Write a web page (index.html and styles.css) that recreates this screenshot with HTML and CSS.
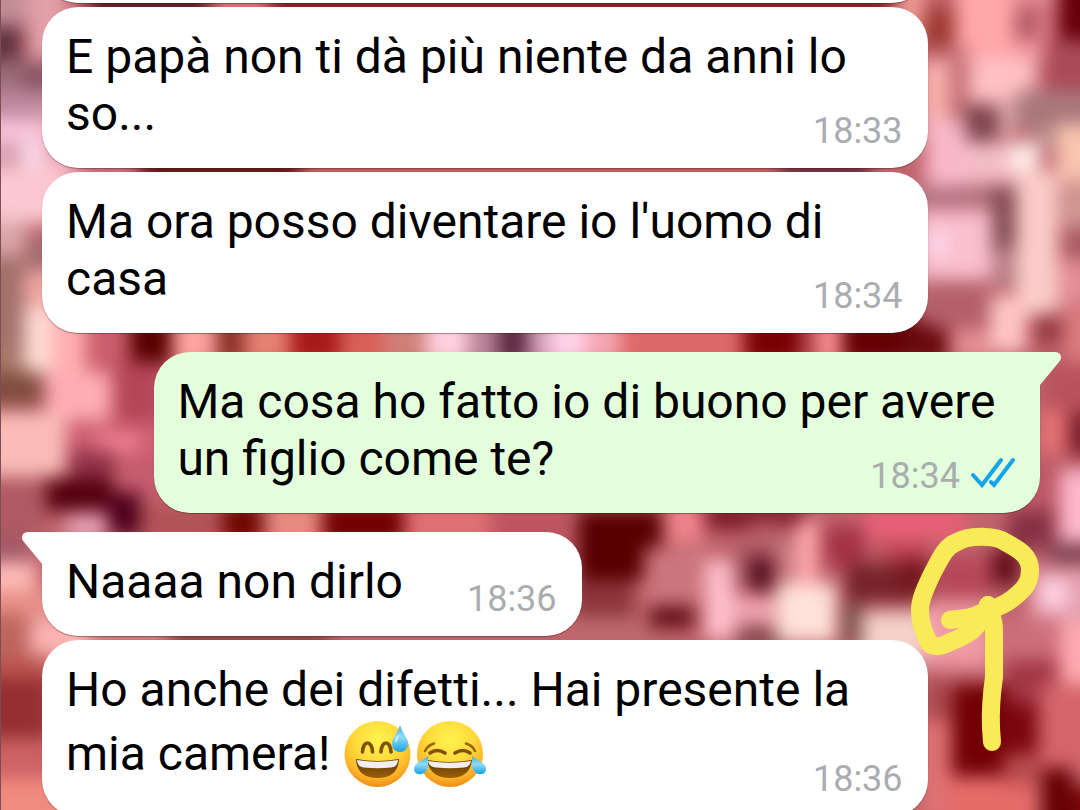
FILE: index.html
```
<!DOCTYPE html>
<html lang="it">
<head>
<meta charset="utf-8">
<meta name="viewport" content="width=device-width, initial-scale=1">
<title>Chat</title>
<link rel="stylesheet" href="styles.css">
</head>
<body>
<main class="chat">
  <svg class="wallpaper" viewBox="0 0 1080 810" preserveAspectRatio="xMidYMid slice" aria-hidden="true">
    <defs><filter id="soft" x="-5%" y="-5%" width="110%" height="110%" color-interpolation-filters="sRGB"><feGaussianBlur stdDeviation="9"/></filter></defs>
    <rect width="1080" height="810" fill="#c4646c"/>
    <g filter="url(#soft)">
      <rect x="-30" y="-30" width="1140" height="870" fill="#c0646c"/>
      <!-- left edge, upper half -->
      <rect x="-30" y="-30" width="60" height="58" fill="#c48d96"/>
      <rect x="28" y="-30" width="40" height="90" fill="#e2a0a8"/>
      <rect x="-30" y="26" width="52" height="34" fill="#60323f"/>
      <rect x="-30" y="60" width="54" height="30" fill="#9a6b79"/>
      <rect x="24" y="62" width="30" height="32" fill="#875262"/>
      <rect x="-30" y="90" width="90" height="28" fill="#bd889c"/>
      <rect x="-30" y="118" width="90" height="24" fill="#f8c4da"/>
      <rect x="-30" y="142" width="52" height="22" fill="#d9a0b4"/>
      <rect x="22" y="142" width="24" height="24" fill="#fadff0"/>
      <rect x="44" y="110" width="50" height="65" fill="#f0a3b2"/>
      <rect x="-30" y="166" width="100" height="58" fill="#fbc8d1"/>
      <rect x="-30" y="222" width="56" height="34" fill="#d9a4a8"/>
      <rect x="26" y="238" width="30" height="32" fill="#a06a6d"/>
      <rect x="-30" y="258" width="54" height="90" fill="#a2706b"/>
      <rect x="24" y="270" width="50" height="48" fill="#efa6a2"/>
      <rect x="24" y="308" width="28" height="68" fill="#ffdcd3"/>
      <!-- gap under the second message -->
      <rect x="52" y="308" width="34" height="100" fill="#ffafb0"/>
      <rect x="86" y="318" width="44" height="52" fill="#cb5e6c"/>
      <rect x="130" y="318" width="42" height="46" fill="#580000"/>
      <rect x="172" y="318" width="44" height="46" fill="#ffa49f"/>
      <rect x="216" y="318" width="28" height="46" fill="#8b3028"/>
      <rect x="244" y="318" width="46" height="46" fill="#e48172"/>
      <rect x="290" y="318" width="50" height="46" fill="#a81a1a"/>
      <rect x="340" y="318" width="44" height="46" fill="#d96056"/>
      <rect x="384" y="318" width="42" height="46" fill="#ce8078"/>
      <rect x="426" y="318" width="42" height="46" fill="#ffd1e0"/>
      <rect x="468" y="318" width="30" height="46" fill="#b98499"/>
      <rect x="498" y="318" width="30" height="46" fill="#59293f"/>
      <rect x="528" y="318" width="22" height="46" fill="#d39fb8"/>
      <rect x="550" y="318" width="36" height="46" fill="#ffd3e8"/>
      <rect x="586" y="318" width="34" height="46" fill="#f5a6b2"/>
      <rect x="620" y="318" width="124" height="46" fill="#dd6a68"/>
      <rect x="744" y="318" width="56" height="46" fill="#780003"/>
      <rect x="800" y="318" width="18" height="46" fill="#b54a4f"/>
      <rect x="818" y="318" width="24" height="46" fill="#fc9095"/>
      <rect x="842" y="318" width="104" height="46" fill="#640004"/>
      <!-- left edge, beside the sent message -->
      <rect x="-30" y="348" width="54" height="30" fill="#a77a6b"/>
      <rect x="-30" y="372" width="72" height="34" fill="#824c40"/>
      <rect x="46" y="372" width="66" height="48" fill="#ffadb4"/>
      <rect x="112" y="362" width="50" height="60" fill="#b54658"/>
      <rect x="-30" y="412" width="96" height="64" fill="#fabcb8"/>
      <rect x="66" y="422" width="96" height="40" fill="#cf6073"/>
      <rect x="96" y="434" width="42" height="18" fill="#f28296"/>
      <rect x="68" y="450" width="46" height="30" fill="#913248"/>
      <rect x="120" y="454" width="48" height="40" fill="#c65c70"/>
      <rect x="-30" y="482" width="72" height="60" fill="#ae5963"/>
      <rect x="46" y="478" width="66" height="34" fill="#55000f"/>
      <rect x="108" y="492" width="32" height="44" fill="#4e001c"/>
      <rect x="66" y="512" width="42" height="28" fill="#e8a0b4"/>
      <!-- gap under the sent message -->
      <rect x="140" y="504" width="78" height="40" fill="#b25358"/>
      <rect x="222" y="504" width="40" height="40" fill="#6e0800"/>
      <rect x="268" y="504" width="54" height="40" fill="#e88b80"/>
      <rect x="322" y="504" width="82" height="40" fill="#720000"/>
      <rect x="404" y="504" width="86" height="40" fill="#df7073"/>
      <rect x="490" y="504" width="82" height="60" fill="#bd5560"/>
      <rect x="578" y="510" width="84" height="70" fill="#560000"/>
      <rect x="572" y="580" width="62" height="36" fill="#8b353b"/>
      <rect x="570" y="616" width="86" height="40" fill="#bd686b"/>
      <rect x="666" y="504" width="38" height="38" fill="#f0858c"/>
      <rect x="704" y="504" width="104" height="26" fill="#7c1a28"/>
      <rect x="644" y="548" width="68" height="55" fill="#cb757c"/>
      <rect x="748" y="522" width="40" height="26" fill="#b55f68"/>
      <rect x="705" y="560" width="30" height="80" fill="#ffbecb"/>
      <rect x="734" y="548" width="18" height="40" fill="#a4545f"/>
      <rect x="750" y="556" width="24" height="36" fill="#561020"/>
      <rect x="776" y="540" width="20" height="50" fill="#c87a80"/>
      <rect x="796" y="520" width="22" height="66" fill="#ffa8ad"/>
      <rect x="650" y="607" width="44" height="20" fill="#5c0a10"/>
      <rect x="734" y="596" width="40" height="28" fill="#efa3b0"/>
      <rect x="738" y="628" width="50" height="20" fill="#7d454a"/>
      <rect x="776" y="584" width="60" height="58" fill="#ffe2da"/>
      <rect x="824" y="526" width="42" height="40" fill="#a53344"/>
      <rect x="864" y="510" width="102" height="30" fill="#e86077"/>
      <rect x="880" y="542" width="50" height="24" fill="#bd4453"/>
      <rect x="845" y="564" width="78" height="38" fill="#762329"/>
      <rect x="842" y="604" width="24" height="40" fill="#7d5048"/>
      <rect x="862" y="612" width="72" height="50" fill="#f4d2ca"/>
      <!-- right edge, upper half -->
      <rect x="900" y="-30" width="24" height="60" fill="#f09c95"/>
      <rect x="924" y="8" width="30" height="38" fill="#9d382f"/>
      <rect x="956" y="-30" width="60" height="92" fill="#ffa7a9"/>
      <rect x="1014" y="-30" width="44" height="36" fill="#e38c94"/>
      <rect x="1014" y="10" width="22" height="30" fill="#b45a65"/>
      <rect x="1036" y="10" width="20" height="40" fill="#d57882"/>
      <rect x="1058" y="-30" width="52" height="70" fill="#68000b"/>
      <rect x="1014" y="40" width="28" height="22" fill="#f0989e"/>
      <rect x="1046" y="40" width="60" height="50" fill="#aa4a58"/>
      <rect x="922" y="60" width="26" height="80" fill="#fab4b0"/>
      <rect x="948" y="46" width="20" height="76" fill="#c8757a"/>
      <rect x="970" y="58" width="66" height="48" fill="#ffc0c4"/>
      <rect x="964" y="104" width="34" height="38" fill="#7d434c"/>
      <rect x="998" y="100" width="18" height="36" fill="#dba6a9"/>
      <rect x="1016" y="90" width="84" height="38" fill="#a9777b"/>
      <rect x="1056" y="124" width="50" height="58" fill="#f8c4af"/>
      <rect x="1030" y="128" width="26" height="20" fill="#ba8c8c"/>
      <rect x="926" y="120" width="40" height="66" fill="#f8b8c9"/>
      <rect x="966" y="142" width="74" height="42" fill="#f4bdc6"/>
      <rect x="1010" y="144" width="30" height="26" fill="#ffeeea"/>
      <rect x="916" y="188" width="94" height="18" fill="#ae7380"/>
      <rect x="992" y="186" width="24" height="62" fill="#804850"/>
      <rect x="994" y="248" width="22" height="40" fill="#b57e85"/>
      <rect x="1016" y="172" width="42" height="144" fill="#fbccc9"/>
      <rect x="1060" y="184" width="50" height="44" fill="#cf9591"/>
      <rect x="1064" y="230" width="46" height="26" fill="#a55a62"/>
      <rect x="1058" y="260" width="50" height="46" fill="#e28d94"/>
      <rect x="918" y="210" width="74" height="70" fill="#f9bfcd"/>
      <rect x="926" y="232" width="22" height="24" fill="#ffd8ee"/>
      <rect x="924" y="282" width="66" height="46" fill="#b45f6b"/>
      <rect x="990" y="296" width="36" height="56" fill="#ffc6c5"/>
      <rect x="1036" y="314" width="26" height="30" fill="#93393f"/>
      <rect x="1064" y="310" width="46" height="58" fill="#dc7c80"/>
      <rect x="952" y="330" width="38" height="30" fill="#e38e92"/>
      <rect x="900" y="330" width="48" height="34" fill="#680a0e"/>
      <!-- right edge, lower half -->
      <rect x="1044" y="362" width="66" height="48" fill="#b9525b"/>
      <rect x="1042" y="410" width="24" height="44" fill="#e87376"/>
      <rect x="1068" y="412" width="42" height="44" fill="#7d1f2b"/>
      <rect x="1028" y="456" width="30" height="58" fill="#bd5867"/>
      <rect x="1060" y="470" width="50" height="74" fill="#ffb8cd"/>
      <rect x="1008" y="510" width="46" height="38" fill="#863044"/>
      <rect x="1050" y="542" width="60" height="22" fill="#804252"/>
      <rect x="938" y="556" width="54" height="40" fill="#b64759"/>
      <rect x="992" y="548" width="28" height="38" fill="#64101c"/>
      <rect x="900" y="560" width="30" height="30" fill="#74151c"/>
      <rect x="926" y="602" width="66" height="66" fill="#f09aa6"/>
      <rect x="1030" y="568" width="80" height="58" fill="#e6a0af"/>
      <rect x="1040" y="580" width="28" height="28" fill="#ffd3e4"/>
      <rect x="1000" y="618" width="60" height="40" fill="#cd6e7b"/>
      <rect x="1060" y="624" width="50" height="60" fill="#ffaab0"/>
      <rect x="1006" y="660" width="52" height="44" fill="#a33745"/>
      <rect x="952" y="684" width="56" height="92" fill="#720004"/>
      <rect x="1000" y="704" width="38" height="50" fill="#7c0610"/>
      <rect x="926" y="680" width="22" height="40" fill="#a7454b"/>
      <rect x="922" y="720" width="28" height="100" fill="#e17172"/>
      <rect x="950" y="778" width="86" height="58" fill="#e56b68"/>
      <rect x="1004" y="754" width="36" height="30" fill="#b94c4e"/>
      <rect x="1040" y="684" width="70" height="84" fill="#d4646a"/>
      <rect x="1042" y="768" width="30" height="68" fill="#640004"/>
      <rect x="1072" y="786" width="40" height="50" fill="#7a0808"/>
      <!-- left edge, lower half -->
      <rect x="-30" y="540" width="60" height="22" fill="#a15868"/>
      <rect x="-30" y="562" width="66" height="28" fill="#ffbcb8"/>
      <rect x="-30" y="590" width="100" height="26" fill="#e89088"/>
      <rect x="-30" y="614" width="56" height="40" fill="#bd665b"/>
      <rect x="30" y="618" width="60" height="40" fill="#fbb4b2"/>
      <rect x="90" y="630" width="80" height="16" fill="#d98684"/>
      <rect x="170" y="626" width="160" height="24" fill="#8b4640"/>
      <rect x="-30" y="656" width="80" height="22" fill="#bb5650"/>
      <rect x="-30" y="678" width="80" height="60" fill="#942f31"/>
      <rect x="-30" y="738" width="80" height="40" fill="#cb6264"/>
      <rect x="-30" y="778" width="100" height="60" fill="#f08b80"/>
      <!-- slivers between the upper messages -->
      <rect x="80" y="160" width="60" height="20" fill="#c56f7d"/>
      <rect x="140" y="156" width="160" height="28" fill="#5c1010"/>
      <rect x="300" y="160" width="480" height="20" fill="#bd5f5a"/>
      <rect x="780" y="156" width="90" height="28" fill="#6b2c3c"/>
      <rect x="90" y="-14" width="120" height="36" fill="#5f2028"/>
      <rect x="210" y="-14" width="60" height="36" fill="#cf7470"/>
      <rect x="270" y="-14" width="620" height="36" fill="#7e2428"/>
    </g>
    <rect width="1" height="810" fill="#7b4e54"/>
  </svg>

  <article class="bubble received previous"></article>

  <article class="bubble received">
    <p class="text">E papà non ti dà più niente da anni lo so...</p>
    <footer class="meta"><time>18:33</time></footer>
  </article>

  <article class="bubble received">
    <p class="text">Ma ora posso diventare io l'uomo di casa</p>
    <footer class="meta"><time>18:34</time></footer>
  </article>

  <article class="bubble sent turn">
    <svg class="tail" viewBox="0 0 22 34" aria-hidden="true"><path d="M0 0H15Q21 0 21 6Q21 8 19 10L0 33Z" fill="#e4ffdb"/></svg>
    <p class="text">Ma cosa ho fatto io di buono per avere un figlio come te?</p>
    <footer class="meta"><time>18:34</time>
      <svg class="ticks" viewBox="0 0 45 42" role="img" aria-label="Letto" fill="none" stroke="#12a5ea" stroke-width="4" stroke-linecap="round" stroke-linejoin="miter"><path d="M3 20L12 30L31 5M21 27L24 30L43 5"/></svg>
    </footer>
  </article>

  <article class="bubble received turn short">
    <svg class="tail" viewBox="0 0 22 34" aria-hidden="true"><path d="M22 0H7Q1 0 1 6Q1 8 3 10L22 33Z" fill="#fff"/></svg>
    <p class="text">Naaaa non dirlo</p>
    <footer class="meta"><time>18:36</time></footer>
  </article>

  <article class="bubble received">
    <p class="text">Ho anche dei difetti... Hai presente la mia camera! <svg class="emoji sweat" viewBox="0 -2 70 72" role="img" aria-label="Sorriso con goccia di sudore">
        <defs>
          <radialGradient id="face" cx="50%" cy="28%" r="72%"><stop offset="0" stop-color="#fff34f"/><stop offset=".5" stop-color="#ffd93a"/><stop offset=".82" stop-color="#fdb226"/><stop offset="1" stop-color="#ec8d18"/></radialGradient>
          <linearGradient id="drop" x1="0" y1="0" x2="0" y2="1"><stop offset="0" stop-color="#4aa9d8"/><stop offset=".45" stop-color="#8fdcf8"/><stop offset="1" stop-color="#14a0ea"/></linearGradient>
          <linearGradient id="mouth" x1="0" y1="0" x2="0" y2="1"><stop offset="0" stop-color="#5e3408"/><stop offset="1" stop-color="#9a6109"/></linearGradient>
        </defs>
        <circle cx="35.5" cy="34" r="33" fill="url(#face)"/>
        <path d="M20.500 32C21 20 30 20 30.500 32M39 32C39.500 20 48.500 20 49 32" fill="none" stroke="#80500d" stroke-width="3.600" stroke-linecap="round"/>
        <path d="M14 39Q35.500 43 57 39Q56 58 35.500 58Q15 58 14 39Z" fill="url(#mouth)"/>
        <path d="M15 40Q35.500 43.500 56 40Q55.500 47 49 47.500Q35.500 49 22 47.500Q15.500 47 15 40Z" fill="#f1eef0"/>
        <path d="M58 5C61 14 66 18 66 24A8 8 0 0 1 50 24C50 18 55 14 58 5Z" fill="url(#drop)"/>
        <path d="M57 14Q53 19 53 23Q56 21 57 14Z" fill="#dcf6ff"/>
      </svg><svg class="emoji joy" viewBox="0 -2 76 72" role="img" aria-label="Lacrime di gioia">
        <circle cx="38" cy="34" r="33" fill="url(#face)"/>
        <path d="M13 31Q16 25 22 23.500M54 23.500Q60 25 63 31" fill="none" stroke="#99630f" stroke-width="2.600" stroke-linecap="round"/>
        <path d="M18 33Q25 28 33 33M43 33Q51 28 58 33" fill="none" stroke="#80500d" stroke-width="3.600" stroke-linecap="round"/>
        <path d="M15 40Q38 44 60 40Q58 58 38 58Q18 58 15 40Z" fill="url(#mouth)"/>
        <path d="M16 41Q38 44.500 59 41Q58 47 52 47.500Q38 49 24 47.500Q17 47 16 41Z" fill="#f1eef0"/>
        <path d="M16 36C16 43 17 47 14 51C10 56 2 55 2 49C2 43 10 41 16 36Z" fill="url(#drop)"/>
        <path d="M60 36C60 43 59 47 62 51C66 56 74 55 74 49C74 43 66 41 60 36Z" fill="url(#drop)"/>
      </svg></p>
    <footer class="meta"><time>18:36</time></footer>
  </article>

  <svg class="scribble" viewBox="905 520 140 235" aria-hidden="true" fill="none" stroke="#f9eb57" stroke-width="18" stroke-linecap="round" stroke-linejoin="round">
    <path d="M950 620C962 618 968 619 977 615C992 608 1001 608 1012 599C1026 588 1030 582 1030 570C1030 556 1020 550 1005 542C997 536 970 534 957 542C944 547 940 560 933 572C927 585 920 598 920 610C920 620 924 633 928 641C931 648 940 647 948 643C964 637 972 632 978 624C984 618 986 614 988 605"/>
    <path d="M988 605Q988 616 992 618Q994 622 994 632V677Q990 705 991 728L992 742"/>
  </svg>
</main>
</body>
</html>
```
FILE: styles.css
```
* {
  box-sizing: border-box;
}

body {
  margin: 0;
  font-family: Roboto, "Noto Sans", sans-serif;
  color: #000;
}

.chat {
  position: relative;
  display: flex;
  flex-direction: column;
  align-items: flex-start;
  gap: 4px;
  height: 100vh;
  overflow: hidden;
}

.wallpaper {
  position: absolute;
  inset: 0;
  width: 100%;
  height: 100%;
}

.bubble {
  position: relative;
  flex: none;
  display: grid;
  max-width: 82%;
  padding: 21px 25px 16px 24px;
  border-radius: 36px;
  box-shadow: 0 1px 1px rgba(60, 20, 20, 0.4);
}

.received {
  margin-left: 42px;
  background: #fff;
}

.sent {
  align-self: flex-end;
  margin-right: 40px;
  padding-left: 23px;
  background: #e4ffdb;
}

.turn {
  margin-top: 15px;
}

.sent + .turn {
  border-top-left-radius: 0;
}

.sent.turn {
  border-top-right-radius: 0;
}

/* Only the lower edge of the earlier message is in view. */
.previous {
  width: 82%;
  height: 72px;
  margin-top: -69px;
}

.text {
  grid-area: 1 / 1;
  margin: 0;
  padding-bottom: 10px;
  font-size: 48px;
  line-height: 57px;
}

.meta {
  grid-area: 1 / 1;
  align-self: end;
  justify-self: end;
  display: flex;
  gap: 10px;
  font-size: 36px;
  line-height: 42px;
  color: #a9adaf;
}

.short {
  grid-template-columns: auto auto;
  column-gap: 64px;
}

.short .meta {
  grid-column: 2;
}

.ticks {
  width: 45px;
  height: 42px;
}

.tail {
  position: absolute;
  top: 0;
  width: 22px;
  height: 34px;
}

.received .tail {
  right: 100%;
  margin-right: -1px;
}

.sent .tail {
  left: 100%;
}

.emoji {
  height: 72px;
  vertical-align: -20px;
}

.sweat {
  width: 70px;
}

.joy {
  width: 76px;
}

.scribble {
  position: absolute;
  top: 520px;
  right: 35px;
  width: 140px;
  height: 235px;
}
```
